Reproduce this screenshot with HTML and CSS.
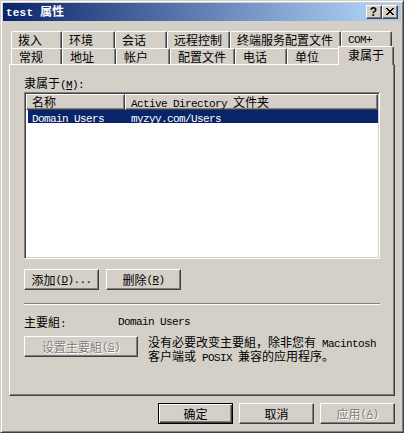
FILE: index.html
```html
<!DOCTYPE html>
<html lang="zh-CN">
<head>
<meta charset="utf-8">
<title>test 属性</title>
<link rel="stylesheet" href="styles.css">
</head>
<body>
<div class="window">
  <div class="titlebar">
    <span class="title"><span class="tm">test </span>属性</span>
    <span class="tbtn help">?</span>
    <span class="tbtn close"><svg width="8" height="7" viewBox="0 0 8 7"><path d="M0 0h2v1H0z M6 0h2v1H6z M1 1h2v1H1z M5 1h2v1H5z M2 2h4v1H2z M3 3h2v1H3z M2 4h4v1H2z M1 5h2v1H1z M5 5h2v1H5z M0 6h2v1H0z M6 6h2v1H6z" fill="#000"/></svg></span>
  </div>
  <div class="main">
    <div class="tabs">
      <div class="tabrow r1">
        <div class="tab">拨入</div>
        <div class="tab">环境</div>
        <div class="tab">会话</div>
        <div class="tab">远程控制</div>
        <div class="tab">终端服务配置文件</div>
        <div class="tab"><span class="m">COM+</span></div>
      </div>
      <div class="tabrow r2">
        <div class="tab">常规</div>
        <div class="tab">地址</div>
        <div class="tab">帐户</div>
        <div class="tab">配置文件</div>
        <div class="tab">电话</div>
        <div class="tab">单位</div>
        <div class="tab sel">隶属于</div>
      </div>
    </div>
    <div class="panel">
      <div class="label">隶属于<span class="m">(<u>M</u>):</span></div>
      <div class="listview">
        <div class="lv-header">
          <div class="hcell c1">名称</div>
          <div class="hcell c2"><span class="m">Active Directory </span>文件夹</div>
        </div>
        <div class="lv-row selected">
          <div class="cell c1"><span class="m">Domain Users</span></div>
          <div class="cell c2"><span class="m">myzyy.com/Users</span></div>
        </div>
      </div>
      <div class="btnrow">
        <div class="btn">添加<span class="m">(<u>D</u>)...</span></div>
        <div class="btn">删除<span class="m">(<u>R</u>)</span></div>
      </div>
      <div class="sep"></div>
      <div class="primary">
        <span class="plabel">主要組<span class="m">:</span></span>
        <span class="m">Domain Users</span>
      </div>
      <div class="setrow">
        <div class="btn wide disabled">设置主要組<span class="m">(<u>S</u>)</span></div>
        <div class="desc">没有必要改变主要組，除非您有<span class="m"> Macintosh</span><br>客户端或<span class="m"> POSIX </span>兼容的应用程序。</div>
      </div>
    </div>
    <div class="footer">
      <div class="btn default">确定</div>
      <div class="btn">取消</div>
      <div class="btn disabled">应用<span class="m">(<u>A</u>)</span></div>
    </div>
  </div>
</div>
</body>
</html>
```

FILE: styles.css
```css
* { box-sizing: border-box; }
html, body { margin: 0; padding: 0; }
body {
  background: #D4D0C8;
  font-family: "Noto Sans CJK SC", "Noto Sans", sans-serif;
  font-size: 12px;
  color: #000;
}
.m {
  font-family: "Liberation Mono", monospace;
  font-size: 11px;
  letter-spacing: -0.6px;
}
.window {
  width: 404px;
  height: 433px;
  border: 1px solid;
  border-color: #D4D0C8 #404040 #404040 #D4D0C8;
  box-shadow: inset 1px 1px #fff, inset -1px -1px #808080;
  padding: 2px;
  display: flex;
  flex-direction: column;
  background: #D4D0C8;
}
.titlebar {
  height: 18px;
  flex: none;
  background: linear-gradient(to right, #0A246A 0%, #A6CAF0 90%, #A6CAF0 100%);
  display: flex;
  align-items: center;
  padding: 0 3px 0 3px;
}
.title {
  flex: 1;
  color: #fff;
  font-weight: bold;
  font-size: 12px;
  line-height: 18px;
}
.title .tm {
  font-family: "Liberation Mono", monospace;
  font-weight: bold;
  font-size: 11px;
  letter-spacing: 0.2px;
}
.tbtn {
  width: 16px;
  height: 14px;
  background: #D4D0C8;
  border: 1px solid;
  border-color: #fff #404040 #404040 #fff;
  box-shadow: inset -1px -1px #808080;
  display: flex;
  align-items: center;
  justify-content: center;
}
.help {
  font-family: "Liberation Sans", sans-serif;
  font-weight: bold;
  font-size: 12px;
  line-height: 12px;
  padding-right: 1px;
}
.close { padding-right: 1px; padding-bottom: 1px; }

.main {
  flex: 1;
  display: flex;
  flex-direction: column;
  padding: 10px 6px 0 6px;
}
.tabs { margin-left: 2px; }
.tabrow { display: flex; }
.tab {
  flex: none;
  border-left: 1px solid #fff;
  border-top: 1px solid #fff;
  border-right: 1px solid #404040;
  box-shadow: inset -1px 0 #808080;
  border-radius: 2px 2px 0 0;
  background: #D4D0C8;
  white-space: nowrap;
}
.tab .m { vertical-align: 2px; line-height: 11px; }
.r1 .tab { height: 17px; line-height: 15px; padding-left: 6px; }
.r2 .tab { height: 16px; line-height: 15px; padding-left: 7px; }
.r1 .tab:nth-child(1) { width: 51px; }
.r1 .tab:nth-child(2) { width: 53px; }
.r1 .tab:nth-child(3) { width: 52px; }
.r1 .tab:nth-child(4) { width: 63px; }
.r1 .tab:nth-child(5) { width: 111px; }
.r1 .tab:nth-child(6) { width: 51px; }
.r2 .tab:nth-child(1) { width: 51px; }
.r2 .tab:nth-child(2) { width: 54px; }
.r2 .tab:nth-child(3) { width: 54px; }
.r2 .tab:nth-child(4) { width: 65px; }
.r2 .tab:nth-child(5) { width: 52px; }
.r2 .tab:nth-child(6) { width: 53px; }
.r2 .tab.sel {
  width: 56px;
  height: 19px;
  margin: -2px -2px -1px -2px;
  padding-left: 9px;
  line-height: 15px;
  position: relative;
  z-index: 1;
}

.panel {
  height: 332px;
  flex: none;
  border: 1px solid;
  border-color: #fff #404040 #404040 #fff;
  box-shadow: inset -1px -1px #808080;
  padding: 12px 14px 0 14px;
  display: flex;
  flex-direction: column;
}
.label { line-height: 12px; height: 12px; }
.listview {
  margin-top: 3px;
  height: 167px;
  background: #fff;
  border: 1px solid;
  border-color: #808080 #fff #fff #808080;
  box-shadow: inset 1px 1px #404040, inset -1px -1px #D4D0C8;
  padding: 1px;
}
.lv-header { display: flex; height: 16px; }
.hcell {
  background: #D4D0C8;
  border: 1px solid;
  border-color: #fff #404040 #404040 #fff;
  box-shadow: inset -1px -1px #808080;
  line-height: 13px;
  padding-left: 5px;
  white-space: nowrap;
}
.hcell.c1 { width: 99px; }
.hcell.c2 { flex: 1; }
.lv-row { display: flex; height: 13px; line-height: 13px; margin-left: 2px; }
.lv-row.selected { background: #0A246A; color: #fff; }
.cell { white-space: nowrap; }
.cell.c1 { width: 97px; padding-left: 4px; }
.cell.c2 { flex: 1; padding-left: 6px; }

.btn {
  width: 75px;
  height: 21px;
  background: #D4D0C8;
  border: 1px solid;
  border-color: #fff #404040 #404040 #fff;
  box-shadow: inset -1px -1px #808080;
  display: flex;
  align-items: center;
  justify-content: center;
  white-space: nowrap;
  line-height: 12px;
}
.btn.default {
  border-color: #000;
  box-shadow: inset 1px 1px #fff, inset -1px -1px #404040, inset -2px -2px #808080;
}
.btn.disabled { color: #808080; text-shadow: 1px 1px #fff; }
.btnrow { display: flex; gap: 7px; margin-top: 10px; }
.sep {
  margin-top: 13px;
  height: 2px;
  border-top: 1px solid #808080;
  border-bottom: 1px solid #fff;
}
.primary { margin-top: 11px; line-height: 12px; height: 12px; display: flex; }
.plabel { width: 94px; }
.setrow { margin-top: 8px; display: flex; gap: 10px; }
.btn.wide { width: 114px; }
.desc { line-height: 12px; white-space: nowrap; }

.footer {
  display: flex;
  justify-content: flex-end;
  gap: 6px;
  margin-top: 7px;
}
```
